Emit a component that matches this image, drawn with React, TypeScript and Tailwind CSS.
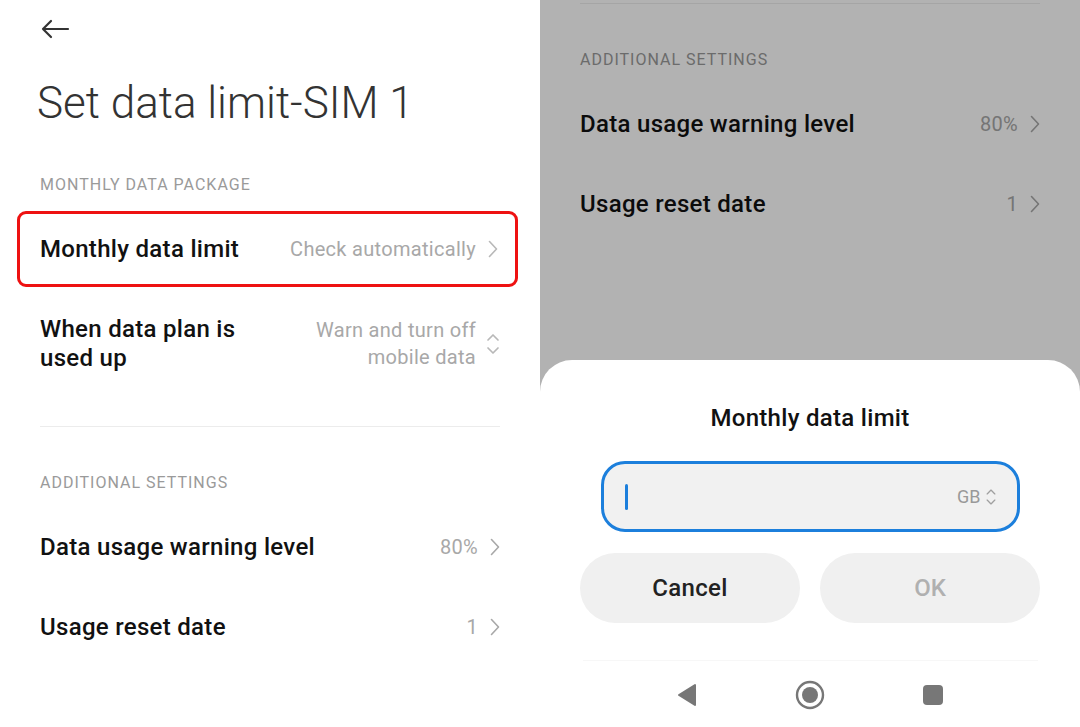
import React from "react";

const font = { fontFamily: "Roboto, 'Noto Sans', Arial, sans-serif" };

function Chevron({ color = "#b3b3b3" }: { color?: string }) {
  return (
    <svg width="10" height="18" viewBox="0 0 10 18" fill="none">
      <path d="M1.5 1.5 L8.5 9 L1.5 16.5" stroke={color} strokeWidth="1.6" strokeLinecap="round" strokeLinejoin="round" />
    </svg>
  );
}

function UpDown({ color = "#b3b3b3", small = false }: { color?: string; small?: boolean }) {
  const w = small ? 12 : 14;
  const h = small ? 20 : 26;
  return (
    <svg width={w} height={h} viewBox="0 0 14 26" fill="none">
      <path d="M2 9 L7 4 L12 9" stroke={color} strokeWidth="1.7" strokeLinecap="round" strokeLinejoin="round" />
      <path d="M2 17 L7 22 L12 17" stroke={color} strokeWidth="1.7" strokeLinecap="round" strokeLinejoin="round" />
    </svg>
  );
}

function Row({ label, value, grayColor }: { label: string; value: string; grayColor: string }) {
  return (
    <div className="flex items-center justify-between h-[80px] px-[40px]">
      <span className="text-[24px] font-medium text-[#111] tracking-[0.3px]">{label}</span>
      <span className="flex items-center gap-[12px] text-[20px] tracking-[0.3px]" style={{ color: grayColor }}>
        {value}
        <Chevron color={grayColor} />
      </span>
    </div>
  );
}

function SectionLabel({ children, color }: { children: React.ReactNode; color: string }) {
  return (
    <div className="px-[40px] text-[16px] uppercase tracking-[1px]" style={{ color }}>
      {children}
    </div>
  );
}

function LeftPage() {
  return (
    <div className="w-[540px] h-[727px] bg-white flex flex-col overflow-hidden" style={font}>
      <div className="pl-[40px] pt-[19px]">
        <svg width="30" height="20" viewBox="0 0 30 20" fill="none">
          <path d="M28 10 H3 M11 2 L3 10 L11 18" stroke="#333" strokeWidth="2.2" strokeLinecap="round" strokeLinejoin="round" />
        </svg>
      </div>
      <h1 className="pl-[37px] mt-[36px] text-[44px] font-light text-[#333] leading-[56px]">Set data limit-SIM 1</h1>
      <div className="mt-[42px]">
        <SectionLabel color="#9a9a9a">Monthly data package</SectionLabel>
      </div>
      <div className="mt-[14px] ml-[17px] w-[501px] h-[76px] border-[3px] border-[#ee1111] rounded-[9px] flex items-center justify-between pl-[20px] pr-[17px]">
        <span className="text-[24px] font-medium text-[#111] tracking-[0.3px]">Monthly data limit</span>
        <span className="flex items-center gap-[12px] text-[20px] tracking-[0.3px] text-[#a8a8a8]">
          Check automatically
          <Chevron color="#b8b8b8" />
        </span>
      </div>
      <div className="flex items-center justify-between px-[40px] pt-[28px]">
        <span className="text-[24px] font-medium text-[#111] leading-[29px] tracking-[0.3px]">
          When data plan is
          <br />
          used up
        </span>
        <span className="flex items-center gap-[10px]">
          <span className="text-[20px] text-[#a8a8a8] text-right leading-[27px] tracking-[0.3px]">
            Warn and turn off
            <br />
            mobile data
          </span>
          <UpDown color="#b8b8b8" />
        </span>
      </div>
      <div className="mx-[40px] mt-[53px] h-px bg-[#ececec]" />
      <div className="mt-[44px]">
        <SectionLabel color="#9a9a9a">Additional settings</SectionLabel>
      </div>
      <div className="mt-[12px]">
        <Row label="Data usage warning level" value="80%" grayColor="#a8a8a8" />
        <Row label="Usage reset date" value="1" grayColor="#a8a8a8" />
      </div>
    </div>
  );
}

function RightPage() {
  return (
    <div className="relative w-[540px] h-[727px] bg-white overflow-hidden" style={font}>
      <div className="flex flex-col">
        <div className="mx-[40px] mt-[3px] h-px bg-[#ececec]" />
        <div className="mt-[44px]">
          <SectionLabel color="#9a9a9a">Additional settings</SectionLabel>
        </div>
        <div className="mt-[12px]">
          <Row label="Data usage warning level" value="80%" grayColor="#a8a8a8" />
          <Row label="Usage reset date" value="1" grayColor="#a8a8a8" />
        </div>
      </div>
      <div className="absolute inset-0 bg-black/30" />
      <div className="absolute left-0 right-0 bottom-0 h-[367px] bg-white rounded-t-[32px] flex flex-col items-center">
        <div className="mt-[44px] text-[24px] font-medium text-[#111] leading-[28px] tracking-[0.3px]">Monthly data limit</div>
        <div className="mt-[29px] w-[419px] h-[71px] rounded-[24px] border-[3px] border-[#1c7fdc] bg-[#f1f1f1] flex items-center pl-[21px] pr-[20px]">
          <div className="w-[3px] h-[26px] bg-[#1c7fdc] rounded-full" />
          <div className="flex-1" />
          <span className="text-[18px] text-[#999]">GB</span>
          <span className="ml-[4px] flex">
            <UpDown color="#a0a0a0" small />
          </span>
        </div>
        <div className="mt-[21px] w-[460px] flex gap-[20px]">
          <div className="flex-1 h-[70px] rounded-full bg-[#f0f0f0] flex items-center justify-center text-[24px] font-medium text-[#222] tracking-[0.3px]">
            Cancel
          </div>
          <div className="flex-1 h-[70px] rounded-full bg-[#f0f0f0] flex items-center justify-center text-[24px] font-medium text-[#b0b0b0]">
            OK
          </div>
        </div>
        <div className="mt-[37px] w-[455px] h-px bg-[#f7f7f7]" />
        <div className="mt-[19px] w-[300px] flex items-center justify-between px-[17px]">
          <svg width="20" height="24" viewBox="0 0 20 24">
            <path d="M18 2 L18 22 L2 12 Z" fill="#777" stroke="#777" strokeWidth="2" strokeLinejoin="round" />
          </svg>
          <svg width="30" height="30" viewBox="0 0 30 30">
            <circle cx="15" cy="15" r="13" fill="none" stroke="#777" strokeWidth="2.4" />
            <circle cx="15" cy="15" r="8" fill="#777" />
          </svg>
          <div className="w-[20px] h-[20px] rounded-[4px] bg-[#777]" />
        </div>
      </div>
    </div>
  );
}

export default function App() {
  return (
    <div className="flex w-[1080px] h-[727px]">
      <LeftPage />
      <RightPage />
    </div>
  );
}
